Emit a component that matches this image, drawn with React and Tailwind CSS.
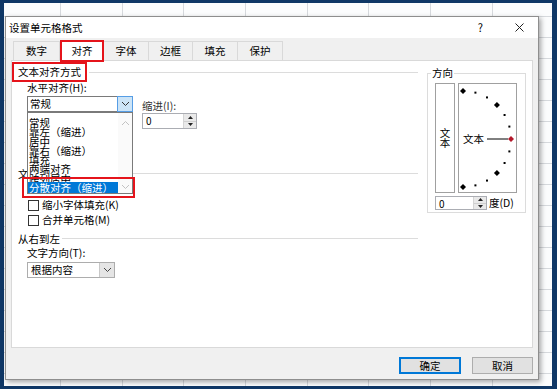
import React from 'react';

const TABS = ['数字', '对齐', '字体', '边框', '填充', '保护'];
const TAB_WIDTHS = ['w-[47px]', 'w-[44px]', 'w-[46px]', 'w-[45px]', 'w-[46px]', 'w-[46px]'];
const LIST_ITEMS = ['常规', '靠左（缩进）', '居中', '靠右（缩进）', '填充', '两端对齐', '跨列居中'];

function ChevronDown({ className }) {
    return (
        <svg width="9" height="6" viewBox="0 0 9 6" className={className}>
            <path d="M1 1l3.5 3.5L8 1" fill="none" stroke="currentColor" strokeWidth="1" />
        </svg>
    );
}

function ChevronUp({ className }) {
    return (
        <svg width="9" height="6" viewBox="0 0 9 6" className={className}>
            <path d="M1 5l3.5-3.5L8 5" fill="none" stroke="currentColor" strokeWidth="1" />
        </svg>
    );
}

function Spinner({ className }) {
    return (
        <div className={`flex border border-[#abadb3] bg-white ${className}`}>
            <span className="flex-1 pl-[3px] text-[10px] leading-[13px]">0</span>
            <div className="flex w-[13px] flex-col border-l border-[#d4d4d4] bg-[#e9e9e9]">
                <div className="flex flex-1 items-center justify-center border-b border-[#cfcfcf]">
                    <svg width="5" height="3" viewBox="0 0 5 3"><path d="M0 3h5L2.5 0z" fill="#222" /></svg>
                </div>
                <div className="flex flex-1 items-center justify-center">
                    <svg width="5" height="3" viewBox="0 0 5 3"><path d="M0 0h5L2.5 3z" fill="#222" /></svg>
                </div>
            </div>
        </div>
    );
}

function GroupHeader({ label }) {
    return (
        <div className="flex h-[13px] items-center">
            <span className="ml-[6px] leading-[13px]">{label}</span>
            <div className="ml-[2px] h-px flex-1 bg-[#dcdcdc]" />
        </div>
    );
}

function Checkbox({ label }) {
    return (
        <div className="ml-[16px] flex h-[14px] items-center gap-[3px]">
            <div className="h-[11px] w-[11px] border border-[#333] bg-white" />
            <span className="leading-[14px]">{label}</span>
        </div>
    );
}

function Dial() {
    const cx = 4;
    const cy = 55;
    const r = 48;
    const pts = [90, 75, 60, 45, 30, 15, -15, -30, -45, -60, -75, -90].map((a) => {
        const rad = (a * Math.PI) / 180;
        return { a, x: cx + r * Math.cos(rad), y: cy - r * Math.sin(rad) };
    });
    return (
        <svg width="57" height="108" viewBox="0 0 57 108" className="absolute left-0 top-0">
            {pts.map((p) =>
                Math.abs(p.a) % 45 === 0 ? (
                    <path key={p.a} d={`M${p.x} ${p.y - 3}l3 3l-3 3l-3-3z`} fill="#000" />
                ) : (
                    <rect key={p.a} x={p.x - 1} y={p.y - 1} width="2" height="2" fill="#000" />
                )
            )}
            <line x1="28" y1="55" x2="49" y2="55" stroke="#000" strokeWidth="1" />
            <path d="M52 52l3 3l-3 3l-3-3z" fill="#b3182a" />
        </svg>
    );
}

export default function App() {
    return (
        <div className="h-[389px] w-[557px] overflow-hidden bg-[#0f3766] pl-[4px] pt-[3px] font-['Noto_Sans_CJK_SC','Microsoft_YaHei',sans-serif] text-[10.5px] text-black">
            <div className="relative h-[383px] w-[548px] bg-[#fbfcfd]">
                <svg width="548" height="383" className="absolute left-0 top-0">
                    {[56, 118, 179, 241, 303, 364, 426, 488].map((x) => (
                        <line key={x} x1={x + 0.5} y1="0" x2={x + 0.5} y2="383" stroke="#d6d9dd" />
                    ))}
                    {Array.from({ length: 18 }, (_, i) => 13 + i * 21).map((y) => (
                        <line key={y} x1="0" y1={y + 0.5} x2="548" y2={y + 0.5} stroke="#d6d9dd" />
                    ))}
                </svg>

                <div className="absolute left-[1px] top-[13px] flex h-[364px] w-[534px] flex-col border border-[#8e8e8e] bg-[#f0f0f0] shadow-[2px_2px_5px_rgba(0,0,0,0.35)]">
                    {/* title bar */}
                    <div className="flex h-[21px] items-center bg-white pl-[3px] pr-[14px]">
                        <span className="flex-1 leading-[21px]">设置单元格格式</span>
                        <span className="mr-[32px] text-[11px] leading-[21px]">?</span>
                        <svg width="9" height="9" viewBox="0 0 9 9">
                            <path d="M0.5 0.5l8 8M8.5 0.5l-8 8" stroke="#222" strokeWidth="1" />
                        </svg>
                    </div>

                    <div className="flex flex-1 flex-col pt-[3px]">
                        {/* tabs */}
                        <div className="flex h-[19px] pl-[7px]">
                            {TABS.map((t, i) =>
                                i === 1 ? (
                                    <div
                                        key={t}
                                        className={`relative z-10 -mb-[2px] -mt-[1px] flex h-[22px] items-center justify-center border-2 border-[#e5141b] bg-white ${TAB_WIDTHS[i]}`}
                                    >
                                        {t}
                                    </div>
                                ) : (
                                    <div
                                        key={t}
                                        className={`-ml-px flex h-[19px] items-center justify-center border border-b-0 border-[#d9d9d9] bg-[#f0f0f0] first:ml-0 ${TAB_WIDTHS[i]}`}
                                    >
                                        {t}
                                    </div>
                                )
                            )}
                        </div>

                        {/* panel */}
                        <div className="mx-[5px] flex h-[288px] border border-[#d9d9d9] bg-white">
                            <div className="flex w-[406px] flex-col">
                                <div className="mt-[1px] flex h-[20px] items-center">
                                    <span className="h-[20px] border-2 border-[#e5141b] pl-[4px] pr-[4px] leading-[16px]">文本对齐方式</span>
                                    <div className="ml-[2px] h-px flex-1 bg-[#dcdcdc]" />
                                </div>

                                <div className="flex h-[47px] items-start">
                                    <div className="ml-[15px] flex flex-col">
                                        <span className="h-[12px] leading-[12px]">水平对齐(H):</span>
                                        <div className="relative mt-[2px] flex h-[16px] w-[106px] border border-[#7a7a7a] bg-white">
                                            <span className="flex-1 pl-[2px] leading-[14px]">常规</span>
                                            <div className="-my-px -mr-px flex w-[16px] items-center justify-center border border-[#569de5] bg-[#cce4f7] text-[#333]">
                                                <ChevronDown />
                                            </div>

                                            {/* open dropdown list */}
                                            <div className="absolute -left-px top-[15px] z-20 flex h-[82px] w-[106px] border border-[#7a7a7a] bg-white">
                                                <div className="flex w-[90px] flex-col pt-[5px]">
                                                    {LIST_ITEMS.map((item) => (
                                                        <span key={item} className="h-[9.3px] whitespace-nowrap pl-[1px] leading-[9.3px]">
                                                            {item}
                                                        </span>
                                                    ))}
                                                    <span className="-mt-[1px] h-[11px] whitespace-nowrap bg-[#0078d7] pl-[1px] leading-[11px] text-white">
                                                        分散对齐（缩进）
                                                    </span>
                                                </div>
                                                <div className="flex flex-1 flex-col items-center justify-between bg-[#fafafa] pb-[3px] pt-[7px] text-[#c2c2c2]">
                                                    <ChevronUp />
                                                    <ChevronDown />
                                                </div>
                                            </div>
                                            <div className="absolute -left-[6px] top-[80px] z-30 h-[21px] w-[113px] border-2 border-[#e5141b]" />
                                        </div>
                                    </div>
                                    <div className="ml-[9px] mt-[18px] flex flex-col">
                                        <span className="h-[12px] leading-[12px] text-[#333]">缩进(I):</span>
                                        <Spinner className="mt-[1px] h-[16px] w-[55px]" />
                                    </div>
                                </div>

                                <div className="mt-[38px]">
                                    <GroupHeader label="文本控制" />
                                </div>
                                <div className="mt-[18px]">
                                    <Checkbox label="缩小字体填充(K)" />
                                </div>
                                <div className="mt-[1px]">
                                    <Checkbox label="合并单元格(M)" />
                                </div>

                                <div className="mt-[5px]">
                                    <GroupHeader label="从右到左" />
                                </div>
                                <span className="ml-[15px] mt-[2px] h-[12px] leading-[12px]">文字方向(T):</span>
                                <div className="ml-[15px] mt-[3px] flex h-[16px] w-[88px] border border-[#adadad] bg-white">
                                    <span className="flex-1 pl-[3px] leading-[14px]">根据内容</span>
                                    <div className="flex w-[15px] items-center justify-center border-l border-[#c8c8c8] bg-[#e5e5e5] text-[#444]">
                                        <ChevronDown />
                                    </div>
                                </div>
                            </div>

                            {/* orientation */}
                            <fieldset className="ml-[9px] mt-[6px] h-[146px] w-[99px] border border-[#dcdcdc] pb-[2px]">
                                <legend className="ml-[3px] px-[1px] leading-[12px]">方向</legend>
                                <div className="mt-[4px] flex pl-[7px]">
                                    <div className="flex h-[110px] w-[20px] flex-col items-center justify-center border border-[#a0a0a0] bg-white leading-[10px]">
                                        <span>文</span>
                                        <span>本</span>
                                    </div>
                                    <div className="relative ml-[3px] h-[110px] w-[59px] border border-[#a0a0a0] bg-white">
                                        <Dial />
                                        <span className="absolute left-[4px] top-[48px] leading-[14px]">文本</span>
                                    </div>
                                </div>
                                <div className="mt-[3px] flex items-center pl-[7px]">
                                    <Spinner className="h-[14px] w-[52px]" />
                                    <span className="ml-[2px] leading-[14px]">度(D)</span>
                                </div>
                            </fieldset>
                        </div>

                        {/* buttons */}
                        <div className="mt-[9px] flex justify-end gap-[11px] pr-[5px]">
                            <div className="flex h-[17px] w-[62px] items-center justify-center border-2 border-[#0078d7] bg-[#e1e1e1]">确定</div>
                            <div className="flex h-[17px] w-[61px] items-center justify-center border border-[#adadad] bg-[#e1e1e1]">取消</div>
                        </div>
                    </div>
                </div>
            </div>
        </div>
    );
}
